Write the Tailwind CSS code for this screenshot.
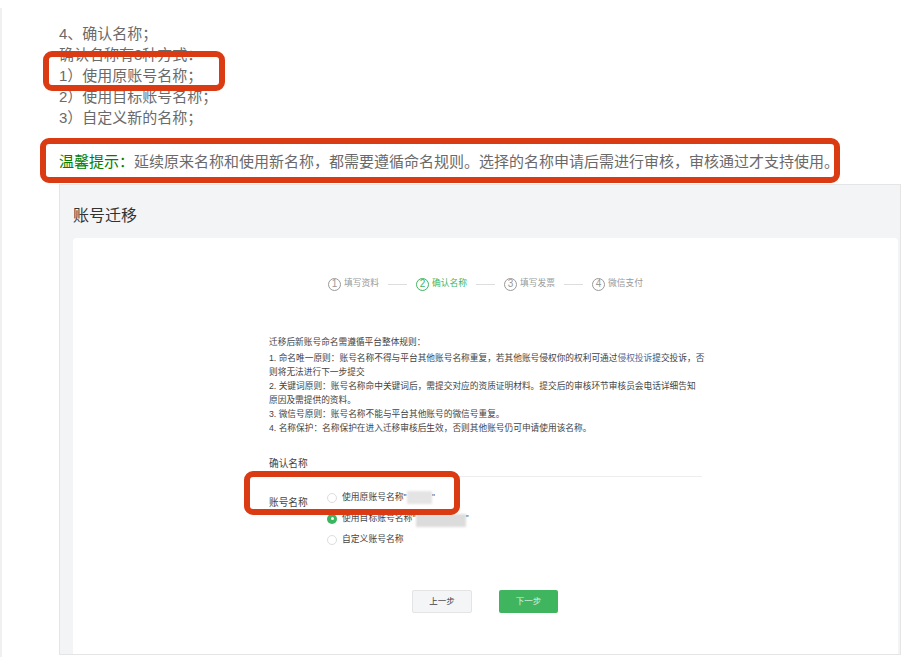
<!DOCTYPE html>
<html lang="zh-CN">
<head>
<meta charset="utf-8">
<script src="https://cdn.jsdelivr.net/npm/@tailwindcss/browser@4"></script>
</head>
<body class="bg-white font-['Liberation_Sans','Noto_Sans_CJK_SC',sans-serif]">
<div class="relative w-[921px] h-[657px] overflow-hidden">
  <div class="h-[650px] w-[2px] bg-[#f0f0f0] absolute left-0 top-[8px]"></div>
  <div class="pt-[23px] pl-[59px] text-[15px] leading-[21px] text-[#6a6a6a]">
    <p>4、确认名称&#xFF1B;</p>
    <p>确认名称有3种方式&#xFF1A;</p>
    <p>1&#xFF09;使用原账号名称&#xFF1B;</p>
    <p>2&#xFF09;使用目标账号名称&#xFF1B;</p>
    <p>3&#xFF09;自定义新的名称&#xFF1B;</p>
    <p class="mt-[23px] whitespace-nowrap"><span class="text-[#008000]">温馨提示&#xFF1A;</span>延续原来名称和使用新名称&#xFF0C;都需要遵循命名规则。选择的名称申请后需进行审核&#xFF0C;审核通过才支持使用。</p>
  </div>

  <section class="ml-[59px] mt-[12px] w-[842px] h-[471px] border border-[#e5e5e5] bg-[#f3f4f6] px-[13px] overflow-hidden">
    <h1 class="pt-[19px] h-[53px] text-[16px] leading-[24px] text-[#333]">账号迁移</h1>
    <div class="w-[825px] h-[416px] bg-white rounded-t-[4px] flex flex-col">
      <div class="pt-[39px] pl-[255px] flex items-center h-[53px] text-[8.75px] text-[#999]">
        <span class="flex items-center gap-[3px]"><i class="w-[13px] h-[13px] rounded-full border border-[#999] flex items-center justify-center not-italic text-[10px] leading-none">1</i>填写资料</span>
        <i class="w-[19px] h-px bg-[#ddd] mx-[9px]"></i>
        <span class="flex items-center gap-[3px] text-[#3fb55f]"><i class="w-[13px] h-[13px] rounded-full border border-[#3fb55f] flex items-center justify-center not-italic text-[10px] leading-none">2</i>确认名称</span>
        <i class="w-[19px] h-px bg-[#ddd] mx-[9px]"></i>
        <span class="flex items-center gap-[3px]"><i class="w-[13px] h-[13px] rounded-full border border-[#999] flex items-center justify-center not-italic text-[10px] leading-none">3</i>填写发票</span>
        <i class="w-[19px] h-px bg-[#ddd] mx-[9px]"></i>
        <span class="flex items-center gap-[3px]"><i class="w-[13px] h-[13px] rounded-full border border-[#999] flex items-center justify-center not-italic text-[10px] leading-none">4</i>微信支付</span>
      </div>
      <div class="ml-[196px] w-[440px] mt-[44px] text-[8.7px] leading-[14px] text-[#444]">
        <p class="mb-[2px]">迁移后新账号命名需遵循平台整体规则&#xFF1A;</p>
        <p>1. 命名唯一原则&#xFF1A;账号名称不得与平台其他账号名称重复&#xFF0C;若其他账号侵权你的权利可通过<span class="text-[#576b95]">侵权投诉</span>提交投诉&#xFF0C;否<br>则将无法进行下一步提交</p>
        <p>2. 关键词原则&#xFF1A;账号名称命中关键词后&#xFF0C;需提交对应的资质证明材料。提交后的审核环节审核员会电话详细告知<br>原因及需提供的资料。</p>
        <p>3. 微信号原则&#xFF1A;账号名称不能与平台其他账号的微信号重复。</p>
        <p>4. 名称保护&#xFF1A;名称保护在进入迁移审核后生效&#xFF0C;否则其他账号仍可申请使用该名称。</p>
      </div>
      <h2 class="ml-[196px] w-[433px] mt-[21px] h-[21px] border-b border-[#eee] text-[9.7px] leading-[15px] text-[#444]">确认名称</h2>
      <div class="ml-[196px] mt-[10px] flex text-[8.8px] leading-[21px] text-[#444]">
        <span class="w-[58px] pt-[5px] text-[9.7px]">账号名称</span>
        <div class="flex flex-col">
          <label class="flex items-center gap-[5px]"><i class="w-[10px] h-[10px] rounded-full border border-[#ddd]"></i><span>使用原账号名称"</span><i class="w-[25px] h-[13px] -ml-[5px] bg-[#e4e4e4] blur-[1px]"></i><span class="-ml-[5px]">"</span></label>
          <label class="flex items-center gap-[5px]"><i class="w-[10px] h-[10px] rounded-full bg-[#3cb55f] flex items-center justify-center"><i class="w-[3px] h-[3px] rounded-full bg-white"></i></i><span>使用目标账号名称"</span><i class="w-[50px] h-[13px] -ml-[5px] mt-[3px] bg-[#dcdcdc] blur-[1px]"></i><span class="-ml-[5px]">"</span></label>
          <label class="flex items-center gap-[5px]"><i class="w-[10px] h-[10px] rounded-full border border-[#ddd]"></i>自定义账号名称</label>
        </div>
      </div>
      <div class="ml-[339px] mt-[40px] flex gap-[27px] text-[8.5px]">
        <button class="w-[60px] h-[23px] rounded-[2px] border border-[#e4e4e4] bg-[#f4f5f7] text-[#444]">上一步</button>
        <button class="w-[59px] h-[23px] rounded-[2px] bg-[#3fb55f] text-white/80">下一步</button>
      </div>
    </div>
  </section>

  <div class="absolute left-[43px] top-[51px] w-[182px] h-[40px] border-[6px] border-[#db3b13] rounded-[9px]"></div>
  <div class="absolute left-[40px] top-[138px] w-[800px] h-[45px] border-[6px] border-[#db3b13] rounded-[9px]"></div>
  <div class="absolute left-[244px] top-[471px] w-[216px] h-[44px] border-[6px] border-[#db3b13] rounded-[9px]"></div>
</div>
</body>
</html>
